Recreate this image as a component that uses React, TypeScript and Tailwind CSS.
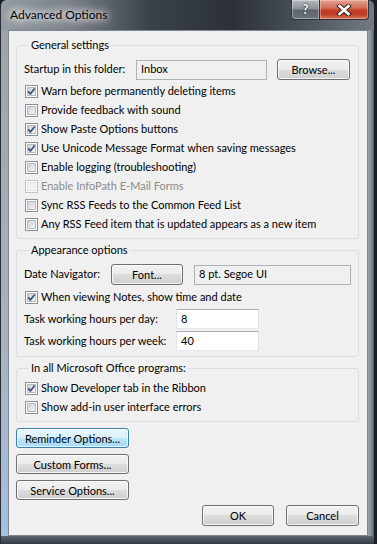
import { useId } from "react";

type BoxProps = { checked?: boolean; disabled?: boolean };

function CheckBox({ checked, disabled }: BoxProps) {
  const id = useId();
  return (
    <svg width="13" height="13" viewBox="0 0 13 13" className="shrink-0">
      <defs>
        <linearGradient id={id} x1="0" y1="0" x2="1" y2="1">
          <stop offset="0" stopColor={disabled ? "#efefef" : "#cbcfd5"} />
          <stop offset="1" stopColor={disabled ? "#f8f8f8" : "#f6f6f6"} />
        </linearGradient>
      </defs>
      <rect x="0.5" y="0.5" width="12" height="12" fill="#fff" stroke={disabled ? "#c4c4c4" : "#8e8f8f"} />
      <rect x="2.5" y="2.5" width="8" height="8" fill={`url(#${id})`} stroke={disabled ? "#e4e4e4" : "#b8bcc2"} />
      {checked && (
        <path d="M3.3 6.4 L5.4 8.9 L9.7 3.4" fill="none" stroke="#3e4e7c" strokeWidth="1.7" strokeLinejoin="round" />
      )}
    </svg>
  );
}

function Check({ label, checked, disabled }: { label: string } & BoxProps) {
  return (
    <div className="flex h-[19px] items-center gap-[3px] whitespace-nowrap pl-[1px]">
      <CheckBox checked={checked} disabled={disabled} />
      <span className={disabled ? "text-[#8a8a8a]" : "text-black"}>{label}</span>
    </div>
  );
}

function Group({ title, className, children }: { title: string; className?: string; children: React.ReactNode }) {
  return (
    <fieldset className={"rounded-[3px] border border-[#d5dfe5] px-[7px] " + (className ?? "")}>
      <legend className="ml-[5px] whitespace-nowrap px-[2px] leading-[16px]">{title}</legend>
      {children}
    </fieldset>
  );
}

function Button({ label, className, focused }: { label: string; className?: string; focused?: boolean }) {
  return (
    <button
      type="button"
      className={
        "flex items-center justify-center whitespace-nowrap rounded-[3px] border leading-none shadow-[inset_0_0_0_1px_rgba(255,255,255,0.75)] " +
        (focused
          ? "border-[#3c7fb1] bg-[linear-gradient(#eaf6fd_0%,#d9f0fc_50%,#bee6fd_50%,#a7d9f5_100%)] "
          : "border-[#707070] bg-[linear-gradient(#f2f2f2_0%,#ebebeb_50%,#dddddd_50%,#cfcfcf_100%)] ") +
        (className ?? "")
      }
    >
      {label}
    </button>
  );
}

function Field({ value, className, disabled }: { value: string; className?: string; disabled?: boolean }) {
  return (
    <div
      className={
        "flex h-[20px] items-center border pl-[4px] " +
        (disabled ? "border-[#adb2b5] bg-[#f0f0f0] " : "border-[#abadb3] border-b-[#e3e9ef] border-l-[#e2e3ea] border-r-[#dbdfe6] bg-white ") +
        (className ?? "")
      }
    >
      {value}
    </div>
  );
}

export default function App() {
  return (
    <div className="h-[544px] w-[377px] overflow-hidden bg-[#1b1f25] font-['Lato',sans-serif] text-[11px] text-black">
      <div className="flex h-[544px] w-[374px] flex-col rounded-t-[6px] border-l border-[#2a2e34] bg-[linear-gradient(90deg,#969ca3_0%,#7b8189_18%,#3b4148_40%,#2c3138_62%,#4a5058_80%,#737a82_100%)]">
        {/* title bar */}
        <div className="flex h-[30px] items-start">
          <span className="ml-[9px] mt-[7px] text-[12px] leading-[16px] text-black [text-shadow:0_0_6px_#fff,0_0_10px_#fff,0_0_14px_#fff]">
            Advanced Options
          </span>
          <div className="ml-auto mr-[5px] flex">
            <div className="flex h-[20px] w-[29px] items-center justify-center rounded-bl-[4px] border border-t-0 border-[#30353b] bg-[linear-gradient(#b4b9bf_0%,#8d939a_45%,#5d646c_55%,#6c737b_100%)] shadow-[inset_0_0_0_1px_rgba(255,255,255,0.35)]">
              <span className="text-[13px] font-bold leading-none text-white [text-shadow:0_0_2px_#222,0_0_1px_#222]">?</span>
            </div>
            <div className="flex h-[20px] w-[49px] items-center justify-center rounded-br-[4px] border border-l-0 border-t-0 border-[#30353b] bg-[linear-gradient(#e2a493_0%,#d4705a_40%,#c43e25_55%,#bb3d24_75%,#d8775c_100%)] shadow-[inset_0_0_0_1px_rgba(255,220,210,0.4)]">
              <svg width="16" height="12" viewBox="0 0 16 12">
                <path d="M3.5 2 L12.5 10 M12.5 2 L3.5 10" stroke="#3b2a26" strokeWidth="4.6" strokeLinecap="square" />
                <path d="M3.5 2 L12.5 10 M12.5 2 L3.5 10" stroke="#fff" strokeWidth="2.6" strokeLinecap="square" />
              </svg>
            </div>
          </div>
        </div>

        {/* body */}
        <div className="flex">
          <div className="w-[7px] bg-[linear-gradient(#9ea4aa,#a9b2bd_60%,#a4c0e2)]" />
          <div className="flex h-[506px] w-[360px] flex-col border border-[#7d858e] bg-[#f0f0f0] pl-[7px] pr-[8px] pt-[6px]">
            <Group title="General settings" className="pb-[4px]">
              <div className="mt-[6px] flex h-[21px] items-center whitespace-nowrap">
                <span className="w-[112px]">Startup in this folder:</span>
                <Field value="Inbox" disabled className="w-[131px]" />
                <Button label="Browse..." className="ml-[10px] h-[21px] w-[73px]" />
              </div>
              <div className="mt-[2px] flex flex-col">
                <Check label="Warn before permanently deleting items" checked />
                <Check label="Provide feedback with sound" />
                <Check label="Show Paste Options buttons" checked />
                <Check label="Use Unicode Message Format when saving messages" checked />
                <Check label="Enable logging (troubleshooting)" />
                <Check label="Enable InfoPath E-Mail Forms" disabled />
                <Check label="Sync RSS Feeds to the Common Feed List" />
                <Check label="Any RSS Feed item that is updated appears as a new item" />
              </div>
            </Group>

            <Group title="Appearance options" className="mt-[3px] pb-[5px]">
              <div className="mt-[6px] flex h-[21px] items-center whitespace-nowrap">
                <span className="w-[87px]">Date Navigator:</span>
                <Button label="Font..." className="h-[21px] w-[72px]" />
                <Field value="8 pt. Segoe UI" disabled className="ml-[11px] w-[157px]" />
              </div>
              <div className="mt-[3px]">
                <Check label="When viewing Notes, show time and date" checked />
              </div>
              <div className="mt-[2px] flex items-center whitespace-nowrap">
                <span className="w-[152px]">Task working hours per day:</span>
                <Field value="8" className="w-[83px]" />
              </div>
              <div className="mt-[2px] flex items-center whitespace-nowrap">
                <span className="w-[152px]">Task working hours per week:</span>
                <Field value="40" className="w-[83px]" />
              </div>
            </Group>

            <Group title="In all Microsoft Office programs:" className="mt-[3px] pb-[4px]">
              <div className="mt-[3px] flex flex-col">
                <Check label="Show Developer tab in the Ribbon" checked />
                <Check label="Show add-in user interface errors" />
              </div>
            </Group>

            <div className="mt-[6px] flex h-[98px] items-start justify-between">
              <div className="flex flex-col gap-[6px]">
                <Button label="Reminder Options..." focused className="h-[20px] w-[113px]" />
                <Button label="Custom Forms..." className="h-[20px] w-[113px]" />
                <Button label="Service Options..." className="h-[20px] w-[113px]" />
              </div>
              <div className="flex gap-[12px] self-end">
                <Button label="OK" className="h-[21px] w-[72px]" />
                <Button label="Cancel" className="h-[21px] w-[73px]" />
              </div>
            </div>
          </div>
          <div className="w-[6px] bg-[linear-gradient(90deg,#9aa1a8,#7d8a98_60%,#4d5c6e)]" />
        </div>

        {/* bottom frame */}
        <div className="h-[8px] bg-[linear-gradient(#5a6572,#343b44)]" />
      </div>
    </div>
  );
}
